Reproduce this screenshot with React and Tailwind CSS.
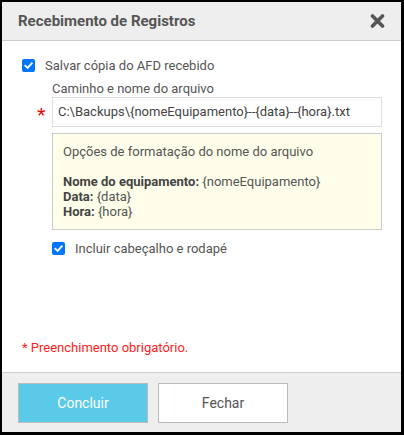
import React from "react";

function Check({ className }) {
  return (
    <span className={"flex items-center justify-center w-[13px] h-[13px] rounded-[2px] bg-[#0075ff] " + (className || "")}>
      <svg width="11" height="11" viewBox="0 0 12 12">
        <path d="M2.5 6.2 L5 8.6 L9.6 3.6" fill="none" stroke="white" strokeWidth="2" strokeLinecap="square" />
      </svg>
    </span>
  );
}

export default function App() {
  return (
    <div className="w-[404px] h-[435px] bg-black pl-[2px] pt-[2px] font-['Roboto',sans-serif]">
      <div className="w-[399px] h-[430px] bg-white flex flex-col">
        <div className="h-[39px] bg-[#eeeeee] border-b border-[#cccccc] flex items-center justify-between pl-[16px] pr-[16px] shrink-0">
          <span className="text-[15px] font-bold text-[#555555]">Recebimento de Registros</span>
          <svg width="15" height="14" viewBox="0 0 15 14" className="mt-[-1px]">
            <path d="M2.5 2 L12.5 12 M12.5 2 L2.5 12" stroke="#555555" strokeWidth="3.6" strokeLinecap="round" />
          </svg>
        </div>
        <div className="flex-1 flex flex-col pt-[17px] pl-[20px] pr-[18px]">
          <div className="flex items-center h-[15px]">
            <Check />
            <span className="ml-[10px] text-[13px] text-[#555555]">Salvar cópia do AFD recebido</span>
          </div>
          <div className="pl-[30px] mt-[8px] text-[13px] text-[#555555] leading-[15px]">Caminho e nome do arquivo</div>
          <div className="flex items-center mt-[1px]">
            <span className="w-[30px] text-[#ee0000] text-[22px] leading-none pl-[15px] pt-[8px] font-['Liberation_Sans',sans-serif]">*</span>
            <div className="w-[330px] h-[30px] border border-[#dddddd] flex items-center pl-[5px] text-[13px] text-[#444444]">
              C:\Backups\{"{nomeEquipamento}"}--{"{data}"}--{"{hora}"}.txt
            </div>
          </div>
          <div className="ml-[30px] mt-[6px] w-[330px] h-[97px] bg-[#fefeea] border border-[#cccccc] pl-[10px] pt-[10px] text-[13px] text-[#555555] leading-[15px]">
            <div>Opções de formatação do nome do arquivo</div>
            <div className="h-[15px]" />
            <div><b className="text-[#444444]">Nome do equipamento:</b> {"{nomeEquipamento}"}</div>
            <div><b className="text-[#444444]">Data:</b> {"{data}"}</div>
            <div><b className="text-[#444444]">Hora:</b> {"{hora}"}</div>
          </div>
          <div className="flex items-center h-[15px] ml-[30px] mt-[11px]">
            <Check />
            <span className="ml-[10px] text-[13px] text-[#555555]">Incluir cabeçalho e rodapé</span>
          </div>
          <div className="mt-auto mb-[15px] text-[13px] text-[#ff2222]">* Preenchimento obrigatório.</div>
        </div>
        <div className="h-[60px] shrink-0 bg-[#eeeeee] border-t border-[#cccccc] flex items-start pt-[10px] pl-[16px] gap-[10px]">
          <button className="w-[130px] h-[40px] bg-[#5bc9e8] border border-[#bbbbbb] text-white text-[14px]">Concluir</button>
          <button className="w-[130px] h-[40px] bg-white border border-[#bbbbbb] text-[#555555] text-[14px]">Fechar</button>
        </div>
      </div>
    </div>
  );
}
